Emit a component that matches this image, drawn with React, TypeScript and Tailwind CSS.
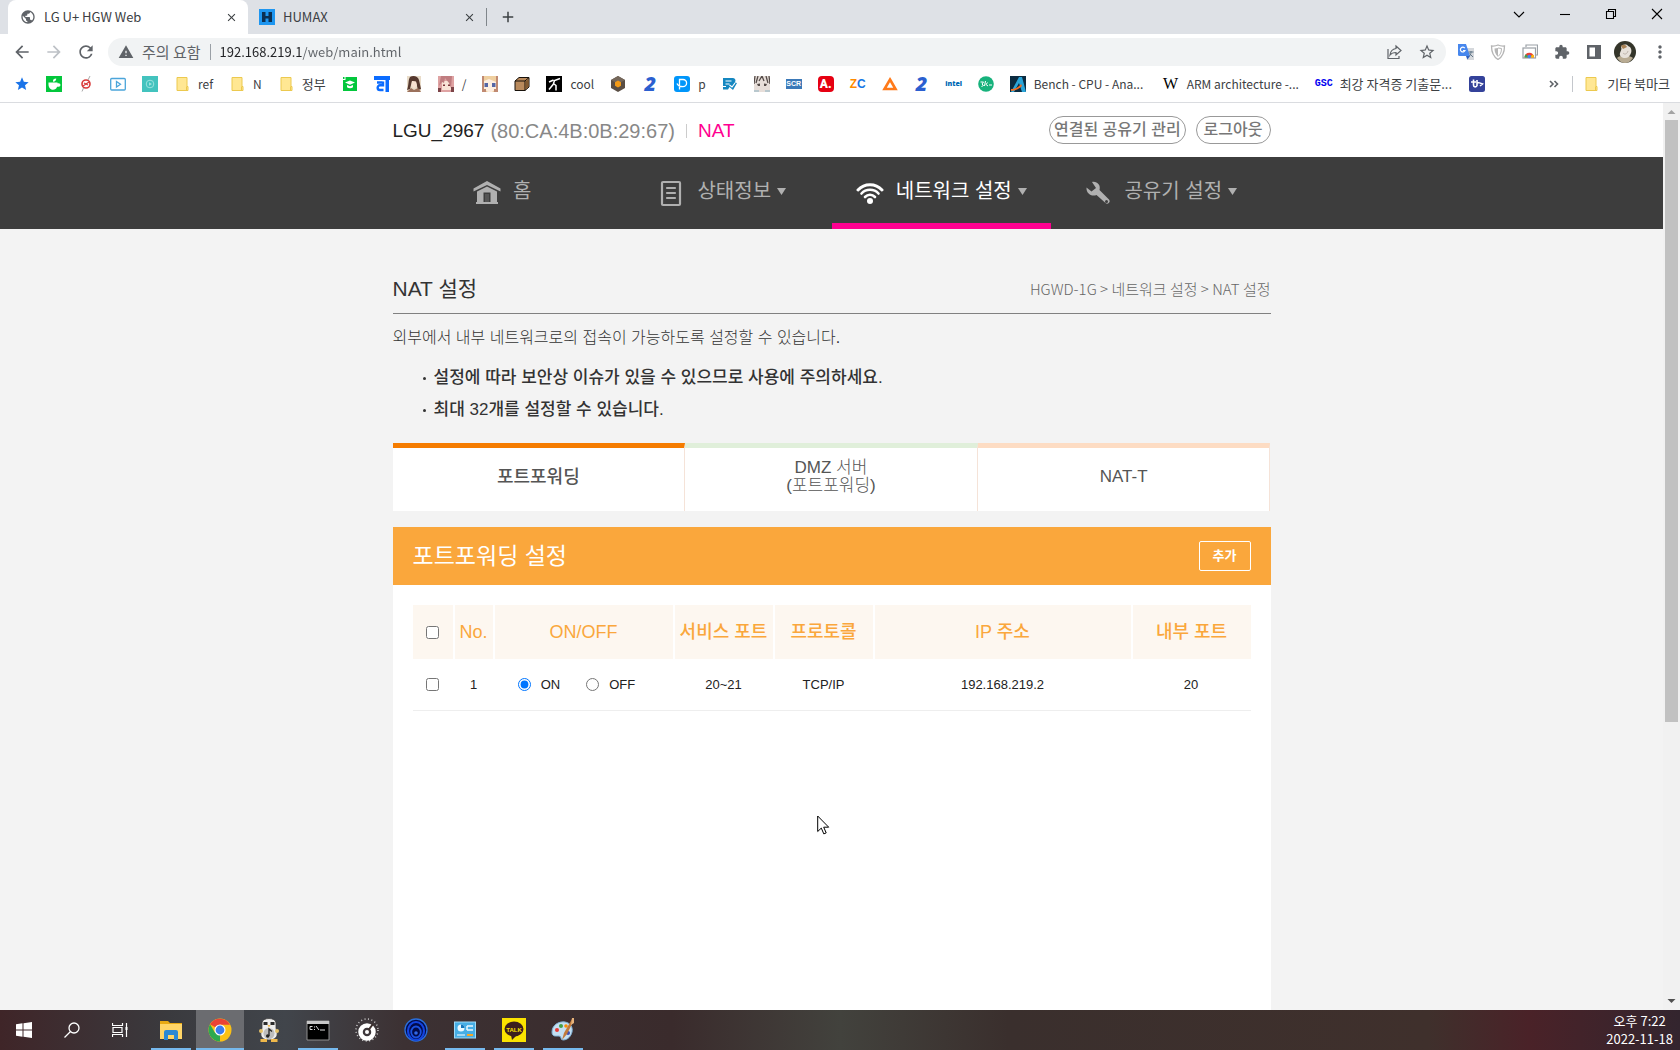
import React, { useState } from 'react';
import {
  MdAdd,
  MdArrowBack,
  MdArrowForward,
  MdClose,
  MdExtension,
  MdMoreVert,
  MdPublic,
  MdRefresh,
  MdStar,
  MdStarBorder,
  MdWarning,
} from 'react-icons/md';

interface Bookmark {
  name: string;
  icon: React.ReactNode;
  label?: string;
  labelClass?: string;
}

const Svg: React.FC<{ children: React.ReactNode; size?: number; box?: number }> = ({ children, size = 16, box = 16 }) => (
  <svg width={size} height={size} viewBox={`0 0 ${box} ${box}`} fill="none" className="shrink-0" aria-hidden="true">
    {children}
  </svg>
);

const Folder = () => (
  <Svg>
    <path d="M3 1.5h10v9h1v4H3z" fill="#ffe793" stroke="#ecc94f" />
    <path d="M12.500 10.500v4" stroke="#ecc94f" />
  </Svg>
);

const Two = () => (
  <span className="w-4 text-center font-['Open_Sans',sans-serif] text-xl leading-4 font-extrabold italic text-[#2b5fd0]">2</span>
);

const BOOKMARKS: Bookmark[] = [
  { name: '즐겨찾기', icon: <MdStar size={16} color="#1a73e8" /> },
  {
    name: '카페',
    icon: (
      <Svg>
        <path d="M0 0h16v16H0z" fill="#03c73c" />
        <path d="M2.500 6.500h9v.7h1.200a1.700 1.700 0 0 1 0 3.600h-1.600C10.200 13 9 13.800 7 13.800S2.500 12 2.500 8.500z" fill="#fff" />
        <path d="M7 5.800c-.200-2 .800-3.200 3.200-3.200.100 2-1 3.200-3.200 3.200z" fill="#fff" />
      </Svg>
    ),
  },
  {
    name: '차단',
    icon: (
      <Svg>
        <circle cx="8" cy="8" r="4" stroke="#d83a3a" strokeWidth="1.600" />
        <path d="M5 10l6-4M6 7l4 2" stroke="#d83a3a" strokeWidth="1.200" />
        <path d="M12 0L10 4M5.500 12L4 15.500" stroke="#aaa" />
      </Svg>
    ),
  },
  {
    name: '동영상',
    icon: (
      <Svg>
        <rect x=".7" y="2.500" width="14.600" height="11.500" rx="1" stroke="#4ba5da" strokeWidth="1.300" />
        <path d="M6.500 5.500l4 2.800-4 2.800z" stroke="#4ba5da" strokeWidth="1.300" />
      </Svg>
    ),
  },
  {
    name: '플레이어',
    icon: (
      <Svg>
        <path d="M0 0h16v16H0z" fill="#43c3be" />
        <circle cx="8" cy="8" r="3.800" stroke="#9be3df" />
        <path d="M7 6.200l3 1.800-3 1.800z" fill="#9be3df" />
      </Svg>
    ),
  },
  { name: 'ref', label: 'ref', icon: <Folder /> },
  { name: 'N', label: 'N', icon: <Folder /> },
  { name: '정부', label: '정부', labelClass: 'text-[13px]', icon: <Folder /> },
  {
    name: '학술',
    icon: (
      <Svg>
        <path d="M3.500 1H15v14H1V4h2.500z" fill="#03c73c" />
        <path d="M1 1h1.500v2H1z" fill="#03c73c" />
        <path d="M3 6.500L8 4.500l5 2L8 8.700zM5 9l3 1.200L11 9v2.300c-1.500 1.200-4.500 1.200-6 0z" fill="#fff" />
      </Svg>
    ),
  },
  {
    name: '검색',
    icon: (
      <Svg>
        <path d="M0 0h16v4H0z" fill="#0b6cff" />
        <path d="M3 6.500h5.500M9 5.500v3.800H6a2.300 2.300 0 0 0 0 4.700h3.500" stroke="#0b6cff" strokeWidth="2.400" />
        <path d="M11.500 3H15v13h-3.500z" fill="#0b6cff" />
      </Svg>
    ),
  },
  {
    name: '갤러리',
    icon: (
      <Svg>
        <path d="M1 0h14v16H1z" fill="#e9dcc9" />
        <path d="M4 1c3-2 8-1 9 3l2 9-3 1-2-8-4-1-2 8-3 1c2-5 1-10 3-13z" fill="#56392f" />
        <path d="M6 5l4 .500 1 4-3 3-2.500-3z" fill="#f8e2d2" />
        <path d="M1 16l4-4 3 2 4-2 3 4z" fill="#9b715c" />
      </Svg>
    ),
  },
  {
    name: '슬래시',
    label: '/',
    icon: (
      <Svg>
        <path d="M0 0h16v16H0z" fill="#dfa3a3" />
        <path d="M4 5h9v9H4z" fill="#f9e3d7" />
        <path d="M3 0L1 10l3-4 2 1 1-5 4 5 2 5 1-12z" fill="#c07d80" />
        <path d="M5 8.500h2v1.500H5zM10 8.500h2v1.500h-2z" fill="#7c3239" />
        <path d="M0 12h3v4H0zM13 11h3v5h-3z" fill="#7c4448" />
      </Svg>
    ),
  },
  {
    name: '캐릭터',
    icon: (
      <Svg>
        <path d="M0 0h16v16H0z" fill="#efcf9f" />
        <path d="M2 5l5-2 7 3v7l-4 3H6l-4-3z" fill="#fdeee0" />
        <path d="M2.500 7h3.500v4H2.500zM10 7h3.500v4H10z" fill="#5566a5" />
        <path d="M0 0h2v16H0zM14 0h2v16h-2zM2 13h2v3H2zM12 13h2v3h-2z" fill="#c08a72" />
      </Svg>
    ),
  },
  {
    name: '상자',
    icon: (
      <Svg>
        <path d="M1 5l4-3.500h10V11l-4 3.500H1z" fill="#b98a5c" stroke="#17110b" />
        <path d="M1 5h10v9.500M11 5l4-3.500" stroke="#17110b" />
        <path d="M11.500 5.500l3-2.500v7.500l-3 3z" fill="#81592f" />
      </Svg>
    ),
  },
  {
    name: 'cool',
    label: 'cool',
    icon: (
      <Svg>
        <path d="M0 0h16v16H0z" fill="#000" />
        <path d="M14 2.500L8.500 4.500l-1 3 2.500 2v5M7.500 4L3 6M7.500 8L3 13.500" stroke="#fff" strokeWidth="1.500" />
      </Svg>
    ),
  },
  {
    name: '육각형',
    icon: (
      <Svg>
        <path d="M8 0l7 4v8l-7 4-7-4V4z" fill="#5a4e44" />
        <path d="M8 0l7 4-7 4-7-4z" fill="#75675a" />
        <path d="M8 4.500l3 1.700v3.600l-3 1.700-3-1.700V6.200z" fill="#f49a16" />
      </Svg>
    ),
  },
  { name: '이', icon: <Two /> },
  {
    name: 'p',
    label: 'p',
    icon: (
      <Svg>
        <rect width="16" height="16" rx="3" fill="#0096fa" />
        <path d="M5.500 13.500V3.500H9a3.500 3.500 0 0 1 0 7.200c-2 0-5-.700-6-3.200" stroke="#fff" strokeWidth="1.300" />
      </Svg>
    ),
  },
  {
    name: '문서',
    icon: (
      <Svg>
        <path d="M1 2h10a2.500 2.500 0 0 1 1.500 4.500L15 7l-4 7-3.500-3L6 13.500H1z" fill="#1587c0" />
        <path d="M3.500 5h6M3.500 8h4M0 10.500h4M7.500 9l2.500 2 3-4" stroke="#fff" strokeWidth="1.200" />
      </Svg>
    ),
  },
  {
    name: '만화',
    icon: (
      <Svg>
        <path d="M0 0h16v16H0z" fill="#e7ded9" />
        <path d="M1 0l-1 8M4 0L2 7M8 0L5 5M8 0l2 5M12 0l2 7M15 0l1 8" stroke="#554c49" strokeWidth="1.300" />
        <path d="M3 8l3-.500V10H4zM10 7.500l3 .500-1 2h-2z" fill="#554c49" />
        <path d="M0 14h5v2H0zM11 14h5v2h-5z" fill="#b9c8ce" />
      </Svg>
    ),
  },
  {
    name: 'SCR',
    icon: (
      <span className="flex h-2.5 w-4 items-center justify-center bg-[#3b79b8] font-['Liberation_Sans',sans-serif] text-[7px] font-bold text-white">
        SCR
      </span>
    ),
  },
  {
    name: 'A.',
    icon: (
      <span className="flex size-4 items-center justify-center rounded-sm bg-[#e60012] font-['Roboto',sans-serif] text-xs font-black text-white">
        A.
      </span>
    ),
  },
  {
    name: 'ZC',
    icon: (
      <span className="flex w-4 justify-center font-['Liberation_Sans',sans-serif] text-xs font-bold text-[#ff8a00]">
        Z<span className="text-[#1577e6]">C</span>
      </span>
    ),
  },
  {
    name: '삼각형',
    icon: (
      <Svg>
        <path d="M8 3.500L13.500 13h-11z" stroke="#ff7a1a" strokeWidth="2.600" />
      </Svg>
    ),
  },
  { name: '이', icon: <Two /> },
  {
    name: 'intel',
    icon: (
      <span className="flex w-4 justify-center font-['Open_Sans',sans-serif] text-[7px] font-extrabold text-[#0068b5]">intel</span>
    ),
  },
  {
    name: '그린',
    icon: (
      <Svg>
        <circle cx="8" cy="8" r="7.800" fill="#17b27c" />
        <path d="M2.500 6h3L4 8l1.500 1.500-2 1M7.500 5L6.500 10M9.500 6.500L8 8.500 10 10M11 9h3" stroke="#fff" />
      </Svg>
    ),
  },
  {
    name: 'Bench',
    label: 'Bench - CPU - Ana...',
    labelClass: 'w-[113px]',
    icon: (
      <Svg>
        <path d="M0 0h16v16H0z" fill="#0b2b40" />
        <path d="M9 1h3l4 15h-4l-3-9-5 9H1z" fill="#2aa4d8" />
        <path d="M1 13c4 0 8-2 10-5l1 2c-3 3-7 5-11 5z" fill="#f36d21" />
      </Svg>
    ),
  },
  {
    name: 'ARM',
    label: 'ARM architecture -...',
    labelClass: 'w-[113px]',
    icon: <span className="flex w-4 justify-center font-['Liberation_Serif',serif] text-base leading-4 text-black">W</span>,
  },
  {
    name: '자격증',
    label: '최강 자격증 기출문...',
    labelClass: 'w-[113px] text-[13px]',
    icon: (
      <span className="flex w-4 justify-center font-['Liberation_Mono',monospace] text-[10px] font-bold text-[#0000f0]">GSC</span>
    ),
  },
  {
    name: '기타',
    icon: (
      <Svg>
        <rect width="16" height="16" rx="2.500" fill="#34429a" />
        <path d="M2 6h5M4.500 3.500V9c0 2 2 2.500 3.500 1M8 4v6M8 6.500c2 0 3.500.500 5.500 1.500L11 10" stroke="#fff" strokeWidth="1.600" />
      </Svg>
    ),
  },
];

const NAV = [
  {
    id: 'home',
    label: '홈',
    caret: false,
    icon: (
      <Svg size={28} box={28}>
        <path d="M14 2l13.500 7.500v3L14 6 .5 12.500v-3z" fill="currentColor" />
        <path d="M14 7.500l10 5V23h1v2H3v-2h1V12.500z" fill="currentColor" />
        <path d="M10.500 13.500h7V23h-7z" fill="#3d3d3d" />
        <path d="M12 15h4v8h-4z" fill="#555" />
      </Svg>
    ),
  },
  {
    id: 'status',
    label: '상태정보',
    caret: true,
    icon: (
      <Svg size={28} box={28}>
        <rect x="5" y="3" width="18" height="23" rx="1" stroke="currentColor" strokeWidth="2.200" />
        <path d="M10 9h8M10 14h8M10 19h8" stroke="currentColor" strokeWidth="2.200" strokeLinecap="round" />
      </Svg>
    ),
  },
  {
    id: 'network',
    label: '네트워크 설정',
    caret: true,
    icon: (
      <Svg size={28} box={28}>
        <path d="M2 11c6.500-7 17.500-7 24 0" stroke="currentColor" strokeWidth="3" strokeLinecap="round" />
        <path d="M5.500 14.500c4.500-5 12.500-5 17 0M9 18c2.800-3 7.200-3 10 0" stroke="currentColor" strokeWidth="2.600" strokeLinecap="round" />
        <circle cx="14" cy="22" r="3" fill="currentColor" />
      </Svg>
    ),
  },
  {
    id: 'router',
    label: '공유기 설정',
    caret: true,
    icon: (
      <Svg size={28} box={28}>
        <path
          d="M8 3c5-1 9 3 7.500 8L25 20.500c2 2.500-1 5.500-3.500 3.500L12.500 16C7.500 18 2 14.500 2.500 8.500l5 4 4.500-3.500z"
          fill="currentColor"
        />
        <circle cx="22.500" cy="22.500" r="1.500" fill="#3d3d3d" />
      </Svg>
    ),
  },
];

const TABS = [
  { id: 'port', lines: ['포트포워딩'], className: 'border-t-[#f57c00] text-lg font-medium' },
  { id: 'dmz', lines: ['DMZ 서버', '(포트포워딩)'], className: 'border-t-[#e0efda] text-[17px] font-light' },
  { id: 'natt', lines: ['NAT-T'], className: 'border-t-[#fddcc3] text-[17px] font-light' },
];

const COLUMNS = [
  { title: 'No.', width: 'w-[40px]' },
  { title: 'ON/OFF', width: 'w-[180px]' },
  { title: '서비스 포트', width: 'w-[100px]' },
  { title: '프로토콜', width: 'w-[100px]' },
  { title: 'IP 주소', width: 'w-[258px]' },
  { title: '내부 포트', width: 'w-[119px]' },
];

const WINDOW_BUTTONS = [
  { name: '탭 검색', d: 'M3 6l5 5 5-5' },
  { name: '최소화', d: 'M3 8.500h10' },
  { name: '이전 크기로', d: 'M3.500 5.500h7v7h-7zM5.500 5.500v-2h7v7h-2' },
  { name: '닫기', d: 'M3 3l10 10M13 3L3 13' },
];

const TabStrip = () => (
  <div className="flex h-[34px] items-stretch bg-[#dee1e6] pl-2 text-[13px] text-[#3c4043]">
    <div className="flex w-60 items-center gap-2 rounded-t-lg bg-white pr-2.5 pl-3">
      <MdPublic size={16} color="#5f6368" />
      <span className="grow">LG U+ HGW Web</span>
      <button aria-label="탭 닫기">
        <MdClose size={13} />
      </button>
    </div>
    <div className="flex w-[238px] items-center gap-2 pr-2.5 pl-[11px]">
      <Svg>
        <path d="M0 0h16v16H0z" fill="#1e96f0" />
        <path d="M3 3h3.500v4h3V3H13v10H9.500V9.500h-3V13H3z" fill="#0b2f52" />
      </Svg>
      <span className="grow">HUMAX</span>
      <button aria-label="탭 닫기">
        <MdClose size={13} />
      </button>
    </div>
    <span className="my-2 w-px bg-[#80868b]" />
    <button aria-label="새 탭" className="ml-3">
      <MdAdd size={18} />
    </button>
    <div className="ml-auto flex items-start text-black">
      {WINDOW_BUTTONS.map((b) => (
        <button key={b.name} aria-label={b.name} className="flex h-7 w-[46px] items-center justify-center">
          <Svg>
            <path d={b.d} stroke="currentColor" strokeWidth="1.100" />
          </Svg>
        </button>
      ))}
    </div>
  </div>
);

const Toolbar = () => (
  <div className="flex h-9 items-center gap-3 px-3 text-[#5f6368]">
    <button aria-label="뒤로">
      <MdArrowBack size={20} />
    </button>
    <button aria-label="앞으로" className="text-[#bdc1c6]">
      <MdArrowForward size={20} />
    </button>
    <button aria-label="새로고침">
      <MdRefresh size={20} />
    </button>
    <div className="flex h-7 grow items-center rounded-full bg-[#f1f3f4] px-2.5">
      <MdWarning size={16} />
      <span className="pl-2 text-[15px]">주의 요함</span>
      <span className="mx-[9px] h-4 w-px bg-[#9aa0a6]" />
      <input
        aria-label="주소"
        defaultValue="192.168.219.1/web/main.html"
        className="grow bg-[linear-gradient(90deg,#202124_83px,#5f6368_83px)] bg-clip-text text-[13px] text-transparent outline-none"
      />
      <button aria-label="공유" className="mr-4">
        <Svg>
          <path d="M2 5v9.500h11V12" stroke="currentColor" strokeWidth="1.200" />
          <path d="M10 2l5 4.500-5 4.500V8.500c-3 0-4.500.500-6 2.500.500-4 2.500-6 6-6.500z" stroke="currentColor" strokeWidth="1.200" />
        </Svg>
      </button>
      <button aria-label="북마크">
        <MdStarBorder size={18} />
      </button>
    </div>
    <div className="flex items-center gap-4">
      <button aria-label="번역">
        <Svg>
          <path d="M6 4h10v12H9z" fill="#d5d8dc" />
          <path d="M0 0h8l4 12H1.500A1.500 1.500 0 0 1 0 10.500z" fill="#4787ed" />
          <path d="M8 12h4l-2.500 3.500z" fill="#2b5fc1" />
          <path d="M6.800 4.200A2.400 2.400 0 1 0 7 6.500H5" stroke="#fff" strokeWidth="1.200" />
          <path d="M10.500 8h5M13 7v1c0 2-1 3.500-2 4.500M11.500 9.500l3.500 3.500" stroke="#5f7487" />
        </Svg>
      </button>
      <button aria-label="보안">
        <Svg>
          <path d="M8 1c2 1 4.500 1.200 6.500 1 0 6-1.500 10.500-6.500 13.500C3 12.500 1.500 8 1.500 2 3.500 2.200 6 2 8 1z" stroke="#b5b5b5" strokeWidth="1.300" />
          <path d="M8 4v8.500C5.500 10.500 4.500 8 4.500 4.500z" fill="#b5b5b5" />
          <path d="M8 4l3.500.5C11.500 8 10.500 10.500 8 12.500" stroke="#b5b5b5" />
        </Svg>
      </button>
      <button aria-label="캡처">
        <Svg>
          <path d="M4 3V1h11.500v10H14" stroke="#9aa0a6" strokeWidth="1.200" />
          <rect x="1" y="4" width="12.500" height="10" fill="#fff" stroke="#9aa0a6" strokeWidth="1.200" />
          <path d="M2.500 13.500a4.800 4.800 0 0 1 9.600 0z" fill="#ea4335" />
          <path d="M2.500 13.500c0-1.500.500-2.500 1.300-3.300L7 13.500z" fill="#34a853" />
          <path d="M12.100 13.500c0-1.500-.500-2.500-1.300-3.300L7.500 13.500z" fill="#fbbc04" />
          <circle cx="7.300" cy="12.500" r="1.800" fill="#4285f4" />
        </Svg>
      </button>
      <button aria-label="확장 프로그램">
        <MdExtension size={16} />
      </button>
      <button aria-label="측면 패널">
        <Svg>
          <path d="M1 1h14v14H1zM3.500 3.500v9H9v-9z" fill="currentColor" fillRule="evenodd" />
        </Svg>
      </button>
    </div>
    <div className="-mr-1.5 flex items-center gap-2.5">
      <button aria-label="프로필">
        <Svg size={22} box={22}>
          <circle cx="11" cy="11" r="11" fill="#34352a" />
          <path d="M3 17c2-3 13-3 16 0-2 3-5 5-8 5s-6-2-8-5z" fill="#b8ab93" />
          <path d="M7 6c1-3 6-3 7-1 3 1 4 4 3 7s-3 5-6 5-6-2-5-5 2-4 1-6z" fill="#e7e1da" />
          <path d="M7 5c2-2 5-1.500 6 1l-4 2z" fill="#a98255" />
          <path d="M9 12c2 2 4 1 5-2" stroke="#bdb4ab" />
        </Svg>
      </button>
      <button aria-label="메뉴" className="px-1">
        <MdMoreVert size={20} />
      </button>
    </div>
  </div>
);

const BookmarksBar = () => (
  <div className="flex h-[33px] items-center gap-4 border-b border-[#dadce0] px-3.5 pb-1 text-xs whitespace-nowrap text-[#3c4043]">
    {BOOKMARKS.map((b, i) => (
      <a key={i} href="#" aria-label={b.name} className="flex h-4 shrink-0 items-center gap-2">
        {b.icon}
        {b.label && <span className={b.labelClass}>{b.label}</span>}
      </a>
    ))}
    <button aria-label="북마크 더보기" className="ml-auto">
      <Svg size={12} box={12}>
        <path d="M2 3l3 3-3 3M6.500 3l3 3-3 3" stroke="#5f6368" strokeWidth="1.600" />
      </Svg>
    </button>
    <a href="#" className="-mx-1 flex items-center gap-2 border-l border-[#c4c7cc] pl-2.5 text-[13px] leading-4">
      <Folder />
      기타 북마크
    </a>
  </div>
);

const PageHeader = () => (
  <header className="bg-white">
    <div className="mx-auto flex h-[54px] max-w-[878px] items-center">
      <h1 className="flex items-center pt-0.5 text-[19px] text-[#222]">
        LGU_2967
        <span className="pl-1.5 text-xl text-[#888]">(80:CA:4B:0B:29:67)</span>
        <span className="mx-[11px] h-3.5 w-px bg-[#ccc]" />
        <span className="text-[#ff0090]">NAT</span>
      </h1>
      <div className="ml-auto flex gap-2.5 text-base font-medium text-[#777]">
        <button className="h-7 rounded-full border border-[#999] px-1 leading-6">연결된 공유기 관리</button>
        <button className="h-7 rounded-full border border-[#999] px-[7px] leading-6">로그아웃</button>
      </div>
    </div>
  </header>
);

const Navigation = () => (
  <nav className="bg-[#3d3d3d]">
    <div className="mx-auto grid h-[72px] max-w-[878px] grid-cols-4 text-xl text-[#b0b0b0]">
      {NAV.map((item) => (
        <a
          key={item.id}
          href={`#${item.id}`}
          className={`flex items-center justify-center border-b-6 pt-1.5 ${
            item.id === 'network' ? 'border-[#ff0090] text-white' : 'border-transparent'
          }`}
        >
          {item.icon}
          <span className="pb-1 pl-3">{item.label}</span>
          {item.caret && (
            <svg width="9" height="7" viewBox="0 0 9 7" className="mb-1 ml-1.5 text-[#b0b0b0]" aria-hidden="true">
              <path d="M0 0h9L4.500 7z" fill="currentColor" />
            </svg>
          )}
        </a>
      ))}
    </div>
  </nav>
);

const PortTable = () => {
  const [checked, setChecked] = useState(false);
  const [on, setOn] = useState(true);

  return (
    <table className="w-full table-fixed text-center">
      <thead>
        <tr className="h-[54px] bg-[#fdf7f0] text-lg text-[#faa73c]">
          <th className="w-[41px] border-r-2 border-white">
            <input type="checkbox" aria-label="전체 선택" className="ml-[13px] block" checked={checked} onChange={() => setChecked(!checked)} />
          </th>
          {COLUMNS.map((c) => (
            <th key={c.title} className={`${c.width} border-r-2 border-white font-medium whitespace-nowrap last:border-r-0`}>
              {c.title}
            </th>
          ))}
        </tr>
      </thead>
      <tbody>
        <tr className="h-[51px] border-b border-[#eee] text-[13px] text-[#222]">
          <td>
            <input type="checkbox" aria-label="1번 선택" className="ml-[13px] block" checked={checked} onChange={() => setChecked(!checked)} />
          </td>
          <td>1</td>
          <td>
            <div className="flex items-center justify-center gap-[26px] pr-3.5">
              <label className="flex items-center gap-2.5">
                <input type="radio" name="use" checked={on} onChange={() => setOn(true)} />
                ON
              </label>
              <label className="flex items-center gap-2.5">
                <input type="radio" name="use" checked={!on} onChange={() => setOn(false)} />
                OFF
              </label>
            </div>
          </td>
          <td>20~21</td>
          <td>TCP/IP</td>
          <td>192.168.219.2</td>
          <td>20</td>
        </tr>
      </tbody>
    </table>
  );
};

const Content = () => (
  <main className="mx-auto flex w-full max-w-[878px] grow flex-col text-[#333]">
    <div className="flex h-[85px] items-end border-b border-[#808080] pb-2">
      <h2 className="text-[21px] leading-8">NAT 설정</h2>
      <p className="ml-auto font-['Noto_Sans_CJK_KR',sans-serif] text-[15px] leading-8 font-light text-[#666]">
        HGWD-1G &gt; 네트워크 설정 &gt; NAT 설정
      </p>
    </div>
    <p className="pt-3 text-base leading-6 font-light">외부에서 내부 네트워크로의 접속이 가능하도록 설정할 수 있습니다.</p>
    <ul className="flex flex-col gap-2 py-4 pl-[30px] text-[17px] leading-6 font-medium">
      {['설정에 따라 보안상 이슈가 있을 수 있으므로 사용에 주의하세요.', '최대 32개를 설정할 수 있습니다.'].map((text) => (
        <li key={text} className="flex items-center gap-2">
          <span className="size-[3px] rounded-full bg-[#333]" />
          {text}
        </li>
      ))}
    </ul>
    <div className="mt-[5px] grid grid-cols-3 text-[#555]">
      {TABS.map((tab) => (
        <button
          key={tab.id}
          className={`flex h-[68px] flex-col items-center justify-center border-t-5 border-r border-r-[#f5e3d8] bg-white pb-1.5 ${tab.className}`}
        >
          {tab.lines.map((line) => (
            <span key={line} className="leading-[18px]">
              {line}
            </span>
          ))}
        </button>
      ))}
    </div>
    <section className="mt-4 flex grow flex-col bg-white">
      <div className="flex h-[58px] items-center bg-[#faa73c] px-5 text-white">
        <h3 className="text-[23px]">포트포워딩 설정</h3>
        <button className="ml-auto h-[30px] rounded-xs border border-white px-[13px] text-[13px] font-bold">추가</button>
      </div>
      <div className="p-5">
        <PortTable />
      </div>
    </section>
  </main>
);

const Scrollbar = () => (
  <div className="flex w-[17px] shrink-0 flex-col items-center bg-[#f1f1f1]">
    <svg width="17" height="17" viewBox="0 0 17 17" aria-hidden="true">
      <path d="M4.500 11h8l-4-4z" fill="#a3a3a3" />
    </svg>
    <div className="w-[13px] grow">
      <div className="h-[69%] bg-[#c1c1c1]" />
    </div>
    <svg width="17" height="17" viewBox="0 0 17 17" aria-hidden="true">
      <path d="M4.500 6h8l-4 4z" fill="#505050" />
    </svg>
  </div>
);

const APPS = [
  {
    name: '파일 탐색기',
    open: true,
    icon: (
      <>
        <path d="M1 3h8l2 2h12v16H1z" fill="#e8a913" />
        <path d="M1 6h22v15H1z" fill="#ffd567" />
        <path d="M5 22v-8a2 2 0 0 1 2-2h10a2 2 0 0 1 2 2v8h-4v-5H9v5z" fill="#2b88d3" />
      </>
    ),
  },
  {
    name: 'Chrome',
    open: true,
    active: true,
    icon: (
      <>
        <circle cx="12" cy="12" r="11.500" fill="#fbc116" />
        <path d="M12 12l0 11.500A11.500 11.500 0 0 1 2 6.300l5 8.500z" fill="#2da94f" />
        <path d="M12 12L2 6.300A11.500 11.500 0 0 1 22 6.800H12z" fill="#ea4335" />
        <path d="M12 23.500l5-8.500-5-3z" fill="#fbc116" />
        <circle cx="12" cy="12" r="5.500" fill="#fff" />
        <circle cx="12" cy="12" r="4.400" fill="#3b7ded" />
      </>
    ),
  },
  {
    name: '음악',
    open: false,
    icon: (
      <>
        <path d="M5 5c0-6 14-6 14 0v5l1 4c1 5-2 8-8 8s-9-3-8-8l1-4z" fill="#ededed" stroke="#3d3d3d" strokeWidth=".8" />
        <path d="M6.500 4h4v3h-4zM13.500 4h4v3h-4z" fill="#2b2b2b" />
        <path d="M10.500 7h3L12 9.500z" fill="#efb84a" />
        <circle cx="4" cy="13" r="2" fill="#e5c26a" />
        <circle cx="20" cy="13" r="2" fill="#e5c26a" />
        <circle cx="12" cy="15.500" r="5.500" fill="#bdbdbd" />
        <path d="M12 18v-7l3 2.500" stroke="#222" strokeWidth="1.300" />
        <circle cx="10.700" cy="18" r="1.700" fill="#222" />
        <path d="M3.500 21h6.500v3H3.500zM14 21h6.500v3H14z" fill="#efb84a" />
      </>
    ),
  },
  {
    name: '명령 프롬프트',
    open: true,
    icon: (
      <>
        <path d="M1 3h22v19H1z" fill="#000" stroke="#8f8f8f" />
        <path d="M1 3h22v3H1z" fill="#c7c7c7" />
        <path d="M6.500 8.500H4v3h2.500M8.500 8.500v1M8.500 11v1M10 8l3 4M14 12h5" stroke="#ddd" />
      </>
    ),
  },
  {
    name: '속도',
    open: false,
    icon: (
      <>
        <circle cx="12" cy="12" r="11" stroke="#cfcfcf" strokeWidth="1.500" strokeDasharray="1 2.500" />
        <circle cx="12" cy="14" r="6.500" stroke="#fff" strokeWidth="4.500" />
        <path d="M12 14l6-8" stroke="#3b2e2c" strokeWidth="2" />
        <circle cx="12" cy="14" r="2" fill="#fff" />
      </>
    ),
  },
  {
    name: '네트워크',
    open: false,
    icon: (
      <>
        <circle cx="12" cy="12" r="11" fill="#020b4c" stroke="#2a6fdc" strokeWidth="1.300" />
        <ellipse cx="12" cy="13" rx="8" ry="9" stroke="#1344e0" strokeWidth="2.200" />
        <ellipse cx="12" cy="14" rx="4.800" ry="5.500" stroke="#1c52e0" strokeWidth="1.800" />
        <circle cx="12" cy="15" r="1.800" fill="#3268e8" />
      </>
    ),
  },
  {
    name: '제어판',
    open: true,
    icon: (
      <>
        <rect x="1.500" y="4" width="21" height="16" fill="#46aee5" stroke="#9fdaf7" />
        <circle cx="8" cy="10" r="3.500" fill="#e9f8ff" />
        <path d="M8 10V6.500A3.500 3.500 0 0 1 11.500 10z" fill="#1476bb" />
        <path d="M14 8h6M14 12h6M14 8v4" stroke="#e9f8ff" strokeWidth="1.500" />
        <path d="M4 17h8" stroke="#fff" />
        <path d="M14 17h6" stroke="#f6a623" strokeWidth="2" />
      </>
    ),
  },
  {
    name: '카카오톡',
    open: true,
    icon: (
      <>
        <path d="M0 0h24v24H0z" fill="#fbe300" />
        <ellipse cx="12" cy="11" rx="9.500" ry="7.500" fill="#3b1e1e" />
        <path d="M9 17l1 5 5-5z" fill="#3b1e1e" />
        <text x="12" y="13.500" textAnchor="middle" fontSize="6" fontWeight="bold" fontFamily="Liberation Sans" fill="#fbe300">
          TALK
        </text>
      </>
    ),
  },
  {
    name: '그림판',
    open: true,
    icon: (
      <>
        <path d="M1 14C1 7 8 3 14 4s8 6 7 10-4 8-9 8c-3 0-1-4-4-4s-7 1-7-4z" fill="#c4dff2" stroke="#7fb0d4" />
        <circle cx="6" cy="12" r="2" fill="#e53935" />
        <circle cx="10" cy="8" r="2" fill="#43a047" />
        <circle cx="15" cy="8" r="1.800" fill="#fb8c00" />
        <circle cx="17" cy="15" r="2" fill="#3f51b5" />
        <path d="M21 1l2 1-7 14-5 6 2-7z" fill="#c17a3b" />
        <path d="M21 0h2v5l-3 2z" fill="#e6b27a" />
      </>
    ),
  },
];

const Taskbar = () => (
  <footer className="flex h-10 shrink-0 items-stretch bg-[linear-gradient(90deg,#3f2528_0%,#3a3a3e_10%,#41454b_17%,#3c3133_24%,#3a2b2c_40%,#42423d_50%,#3a2f2d_60%,#3f302c_85%,#4a2228_91%,#33252e_100%)] text-white">
    <div className="flex">
      <button aria-label="시작" className="flex w-12 items-center justify-center">
        <Svg>
          <path d="M0 2.300l6.500-1v6.200H0zM7.500 1.200L16 0v7.500H7.500zM0 8.500h6.500v6.200l-6.500-1zM7.500 8.500H16V16l-8.500-1.200z" fill="#fff" />
        </Svg>
      </button>
      <button aria-label="검색" className="flex w-12 items-center justify-center">
        <Svg>
          <circle cx="10" cy="6" r="5" stroke="#fff" strokeWidth="1.300" />
          <path d="M6.500 9.500L.5 15.500" stroke="#fff" strokeWidth="1.300" />
        </Svg>
      </button>
      <button aria-label="작업 보기" className="flex w-12 items-center justify-center">
        <Svg>
          <path d="M.5 1v2.500h10V1M.5 15v-2.500h10V15M1 5.500h9v5H1zM14.500 1v14" stroke="#fff" strokeWidth="1.200" />
          <path d="M13.500 5h2v3h-2z" fill="#fff" />
        </Svg>
      </button>
    </div>
    <div className="ml-[3px] flex gap-px">
      {APPS.map((app) => (
        <button
          key={app.name}
          aria-label={app.name}
          className={`flex w-12 flex-col items-center justify-between pt-2 ${app.active ? 'bg-[#6b6c70]' : ''}`}
        >
          <svg width="24" height="24" viewBox="0 0 24 24" fill="none" aria-hidden="true">
            {app.icon}
          </svg>
          <span className={`h-0.5 ${app.active ? 'w-full' : 'w-10'} ${app.open ? 'bg-[#76b9ed]' : ''}`} />
        </button>
      ))}
    </div>
    <div className="mr-[7px] ml-auto flex flex-col items-center justify-center text-[13px] leading-[18px]">
      <span>오후 7:22</span>
      <span>2022-11-18</span>
    </div>
  </footer>
);

const App: React.FC = () => {
  return (
    <div className="relative flex h-screen flex-col overflow-hidden bg-white font-['Noto_Sans_CJK_KR',sans-serif]">
      <TabStrip />
      <Toolbar />
      <BookmarksBar />
      <div className="flex min-h-0 grow">
        <div className="flex grow flex-col bg-[#f3f3f3] font-['Liberation_Sans','Noto_Sans_CJK_KR',sans-serif]">
          <PageHeader />
          <Navigation />
          <Content />
        </div>
        <Scrollbar />
      </div>
      <Taskbar />
      <svg width="13" height="20" viewBox="0 0 13 20" className="absolute top-[815px] left-[817px]" aria-hidden="true">
        <path d="M.7 1v15.500l3.600-3.400 2.500 5.800 2.400-1-2.500-5.700h5z" fill="#fff" stroke="#000" />
      </svg>
    </div>
  );
};

export default App;
